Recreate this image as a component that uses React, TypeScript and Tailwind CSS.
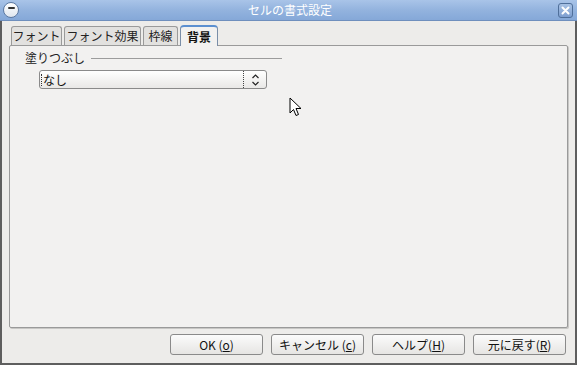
import React from "react";

const font = { fontFamily: '"Noto Sans CJK JP", "DejaVu Sans", sans-serif' };

function Btn({ children, w }: { children: React.ReactNode; w: string }) {
  return (
    <div
      className={`${w} h-[21px] rounded-[3px] border border-[#8a8a8a] bg-gradient-to-b from-[#fbfbfb] to-[#e6e5e3] flex items-center justify-center text-[12px] text-[#111] leading-none`}
    >
      {children}
    </div>
  );
}

export default function App() {
  return (
    <div className="w-[577px] h-[365px] relative overflow-hidden bg-[#5e5e5e]" style={font}>
      <div className="absolute inset-0 mx-[2px] mb-[2px] flex flex-col bg-[#edecea]">
        {/* title bar */}
        <div className="h-[21px] -mx-[2px] bg-gradient-to-b from-[#a9c4e8] via-[#93b3de] to-[#85a8d8] border-b border-[#6f8fbd] flex items-center relative">
          <div className="absolute left-[3px] top-[2px] w-[16px] h-[16px] rounded-full bg-gradient-to-b from-[#ffffff] to-[#dfe6ef] border border-[#5d7aa3] flex items-start justify-center">
            <div className="mt-[4px] w-[7px] h-[2px] bg-[#333] rounded-sm" />
          </div>
          <div className="flex-1 text-center text-white text-[12px] leading-none pl-[3px]">セルの書式設定</div>
          <div className="absolute right-[4px] top-[3px] w-[15px] h-[15px] rounded-[3px] border border-[#4f6f9a] bg-gradient-to-b from-[#a8c2e4] to-[#7d9ed0] flex items-center justify-center">
            <svg width="9" height="9" viewBox="0 0 9 9">
              <path d="M1.5 1.5 L7.5 7.5 M7.5 1.5 L1.5 7.5" stroke="white" strokeWidth="2" strokeLinecap="round" />
            </svg>
          </div>
        </div>
        {/* tabs */}
        <div className="flex items-end h-[24px] pl-[9px] gap-[2px] relative z-10">
          <div className="w-[51px] h-[19px] border border-b-0 border-[#9a9a9a] rounded-t-[3px] bg-[#e2e1df] text-[12px] leading-none flex items-center justify-center whitespace-nowrap text-[#222]">フォント</div>
          <div className="w-[77px] h-[19px] border border-b-0 border-[#9a9a9a] rounded-t-[3px] bg-[#e2e1df] text-[12px] leading-none flex items-center justify-center whitespace-nowrap text-[#222]">フォント効果</div>
          <div className="w-[35px] h-[19px] border border-b-0 border-[#9a9a9a] rounded-t-[3px] bg-[#e2e1df] text-[12px] leading-none flex items-center justify-center whitespace-nowrap text-[#222]">枠線</div>
          <div className="w-[38px] h-[21px] -mb-[1px] border border-b-0 border-[#7a8ea8] border-t-2 border-t-[#5b8fd0] rounded-t-[4px] bg-[#f2f1f0] text-[12px] font-bold leading-none flex items-center justify-center whitespace-nowrap text-[#111]">背景</div>
        </div>
        {/* panel */}
        <div className="mx-[7px] h-[283px] border border-[#9a9a9a] bg-[#f2f1f0] rounded-[2px] shadow-[1px_1px_0_#c8c7c5]">
          <div className="pl-[15px] pt-[6px] flex items-center gap-[6px] w-[272px]">
            <span className="text-[12px] leading-none text-[#222]">塗りつぶし</span>
            <div className="flex-1 h-px bg-[#9c9c9c] mt-[1px]" />
          </div>
          <div className="ml-[29px] mt-[6px] w-[228px] h-[19px] rounded-[3px] border border-[#8a8a8a] bg-gradient-to-b from-[#ffffff] to-[#e9e8e6] flex items-center">
            <div className="flex-1 pl-[1px] text-[12px] leading-none text-[#111] flex items-center">
              <span className="border-l border-dotted border-[#333] pl-[1px]">なし</span>
            </div>
            <div className="h-full border-l border-dotted border-[#444] w-[23px] flex items-center justify-center">
              <svg width="9" height="14" viewBox="0 0 9 14">
                <path d="M1.5 5 L4.5 2 L7.5 5 M1.5 9 L4.5 12 L7.5 9" stroke="#222" strokeWidth="1.2" fill="none" />
              </svg>
            </div>
          </div>
        </div>
        {/* buttons */}
        <div className="flex justify-end gap-[8px] pr-[9px] mt-[6px]">
          <Btn w="w-[93px]">OK (<u>o</u>)</Btn>
          <Btn w="w-[93px]">キャンセル (<u>c</u>)</Btn>
          <Btn w="w-[93px]">ヘルプ(<u>H</u>)</Btn>
          <Btn w="w-[93px]">元に戻す(<u>R</u>)</Btn>
        </div>
      </div>
      {/* mouse cursor */}
      <svg className="absolute left-[289px] top-[97px]" width="14" height="21" viewBox="0 0 14 21">
        <path d="M1 1 L1 16 L4.5 12.5 L7 18.5 L9.5 17.5 L7 11.5 L12 11.5 Z" fill="white" stroke="black" strokeWidth="1" />
      </svg>
    </div>
  );
}
